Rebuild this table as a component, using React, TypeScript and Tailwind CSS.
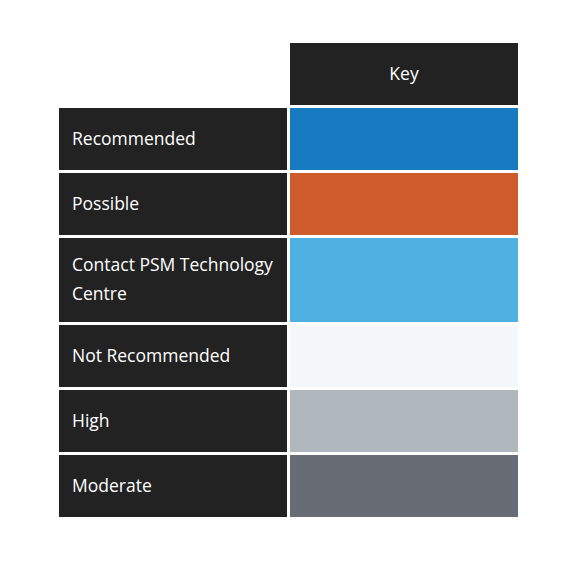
import React from 'react';

const rows = [
  { label: 'Recommended', color: 'bg-[#167bc1]' },
  { label: 'Possible', color: 'bg-[#cf5c2b]' },
  { label: 'Contact PSM Technology Centre', color: 'bg-[#4fb0e2]' },
  { label: 'Not Recommended', color: 'bg-[#f5f7fa]' },
  { label: 'High', color: 'bg-[#b0b8be]' },
  { label: 'Moderate', color: 'bg-[#686c74]' },
];

const App: React.FC = () => {
  return (
    <div className="min-h-[562px] w-[587px] bg-white pt-[43px] pl-[59px] font-['Open_Sans',sans-serif]">
      <div className="grid grid-cols-[228px_228px] gap-[3px]">
        <div />
        <div className="flex min-h-[62px] items-center justify-center bg-[#222222] pb-[1px] text-[17.5px] text-white">
          Key
        </div>
        {rows.map((row) => (
          <React.Fragment key={row.label}>
            <div className="flex min-h-[62px] items-center bg-[#222222] px-[13px] pt-[12px] pb-[14px] text-[17.5px] leading-[29px] text-white">
              {row.label}
            </div>
            <div className={`min-h-[62px] ${row.color}`} />
          </React.Fragment>
        ))}
      </div>
    </div>
  );
};

export default App;
